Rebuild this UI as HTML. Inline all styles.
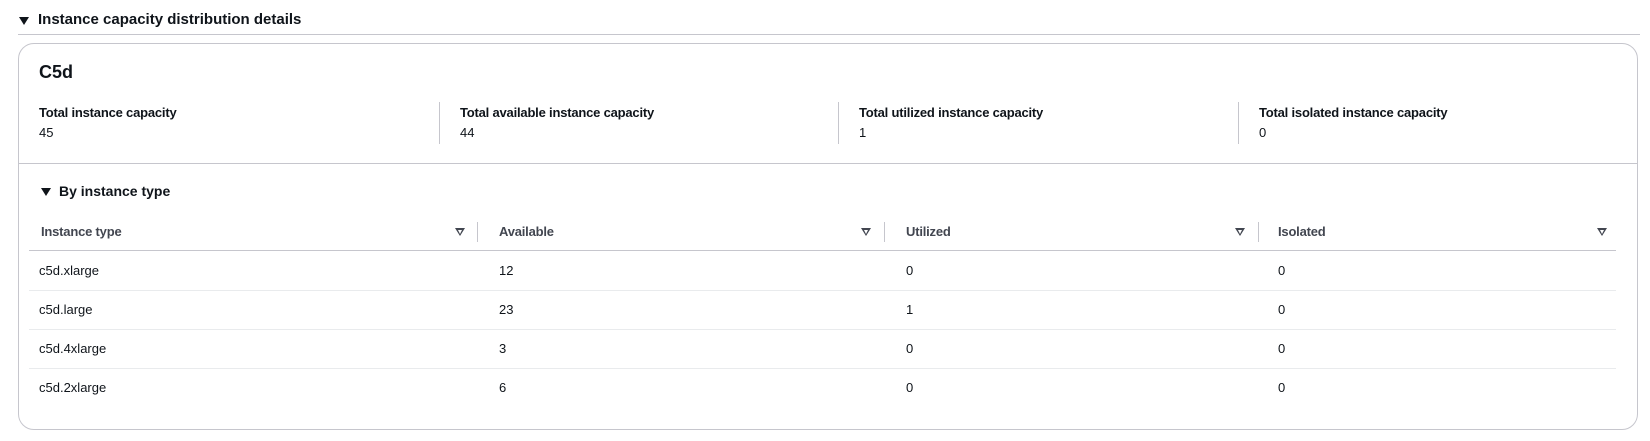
<!DOCTYPE html>
<html><head><meta charset="utf-8"><style>
*{margin:0;padding:0;box-sizing:border-box}
body{width:1650px;height:441px;background:#fff;font-family:"Liberation Sans",sans-serif;color:#0f141a;position:relative;overflow:hidden}
.a{position:absolute;white-space:nowrap}
.tri{position:absolute;width:0;height:0;border-left:5px solid transparent;border-right:5px solid transparent;border-top:8px solid #0f141a}
.lbl{font-weight:bold;font-size:13px;letter-spacing:-0.2px}
.val{font-size:13px}
.th{font-weight:bold;font-size:13px;color:#424650;letter-spacing:-0.2px}
.td{font-size:13px}
.vs{position:absolute;width:1px;background:#c6c6cd}
.hl{position:absolute;height:1px;background:#e9ebed}
.sort{position:absolute;width:0;height:0;border-left:5px solid transparent;border-right:5px solid transparent;border-top:8px solid #424650}
.sort::after{content:"";position:absolute;left:-2.5px;top:-6.5px;border-left:2.5px solid transparent;border-right:2.5px solid transparent;border-top:4px solid #fff}
</style></head><body>
<div class="tri" style="left:19px;top:17px"></div>
<div class="a" style="left:38px;top:11px;font-size:15px;font-weight:bold">Instance capacity distribution details</div>
<div class="hl" style="left:18px;top:34px;width:1622px;background:#c6c6cd"></div>

<div class="a" style="left:18px;top:43px;width:1620px;height:387px;border:1px solid #c6c6cd;border-radius:16px"></div>
<div class="a" style="left:39px;top:62px;font-size:18px;font-weight:bold">C5d</div>

<div class="a lbl" style="left:39px;top:105px">Total instance capacity</div>
<div class="a val" style="left:39px;top:125px">45</div>
<div class="vs" style="left:439px;top:102px;height:42px"></div>
<div class="a lbl" style="left:460px;top:105px">Total available instance capacity</div>
<div class="a val" style="left:460px;top:125px">44</div>
<div class="vs" style="left:838px;top:102px;height:42px"></div>
<div class="a lbl" style="left:859px;top:105px">Total utilized instance capacity</div>
<div class="a val" style="left:859px;top:125px">1</div>
<div class="vs" style="left:1238px;top:102px;height:42px"></div>
<div class="a lbl" style="left:1259px;top:105px">Total isolated instance capacity</div>
<div class="a val" style="left:1259px;top:125px">0</div>

<div class="hl" style="left:19px;top:163px;width:1618px;background:#c6c6cd"></div>

<div class="tri" style="left:41px;top:188px"></div>
<div class="a" style="left:59px;top:183px;font-size:14px;font-weight:bold">By instance type</div>

<div class="a th" style="left:41px;top:224px">Instance type</div>
<div class="sort" style="left:455px;top:228px"></div>
<div class="vs" style="left:477px;top:222px;height:20px"></div>
<div class="a th" style="left:499px;top:224px">Available</div>
<div class="sort" style="left:861px;top:228px"></div>
<div class="vs" style="left:884px;top:222px;height:20px"></div>
<div class="a th" style="left:906px;top:224px">Utilized</div>
<div class="sort" style="left:1235px;top:228px"></div>
<div class="vs" style="left:1258px;top:222px;height:20px"></div>
<div class="a th" style="left:1278px;top:224px">Isolated</div>
<div class="sort" style="left:1597px;top:228px"></div>
<div class="hl" style="left:29px;top:250px;width:1587px;background:#c6c6cd"></div>

<div class="a td" style="left:39px;top:263px">c5d.xlarge</div>
<div class="a td" style="left:499px;top:263px">12</div>
<div class="a td" style="left:906px;top:263px">0</div>
<div class="a td" style="left:1278px;top:263px">0</div>
<div class="hl" style="left:29px;top:290px;width:1587px"></div>
<div class="a td" style="left:39px;top:302px">c5d.large</div>
<div class="a td" style="left:499px;top:302px">23</div>
<div class="a td" style="left:906px;top:302px">1</div>
<div class="a td" style="left:1278px;top:302px">0</div>
<div class="hl" style="left:29px;top:329px;width:1587px"></div>
<div class="a td" style="left:39px;top:341px">c5d.4xlarge</div>
<div class="a td" style="left:499px;top:341px">3</div>
<div class="a td" style="left:906px;top:341px">0</div>
<div class="a td" style="left:1278px;top:341px">0</div>
<div class="hl" style="left:29px;top:368px;width:1587px"></div>
<div class="a td" style="left:39px;top:380px">c5d.2xlarge</div>
<div class="a td" style="left:499px;top:380px">6</div>
<div class="a td" style="left:906px;top:380px">0</div>
<div class="a td" style="left:1278px;top:380px">0</div>
</body></html>
